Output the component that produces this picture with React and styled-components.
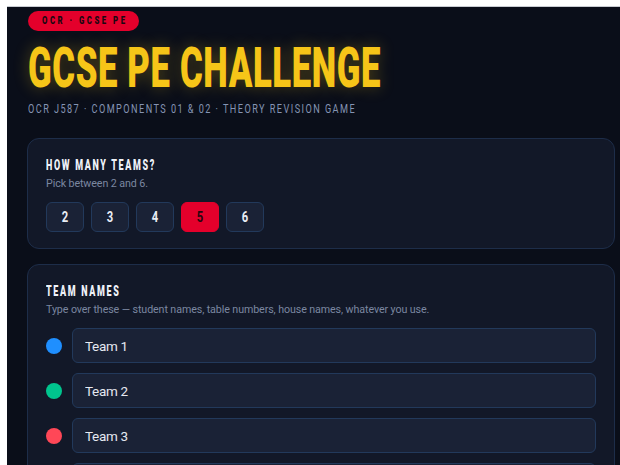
import React, { useState } from 'react';
import styled, { createGlobalStyle } from 'styled-components';

const GlobalStyle = createGlobalStyle`
    html, body {
        margin: 0;
        padding: 0;
        background: #ffffff;
        overflow: hidden;
    }
    * { box-sizing: border-box; }
`;

// no condensed face is installed, so the display type is Roboto squeezed horizontally
const DISPLAY = `"Roboto", "Liberation Sans", sans-serif`;
const BODY = `"Roboto", "Inter", sans-serif`;

const teamColours = ['#1f8fff', '#00c58e', '#ff4757', '#f5c518', '#a55eea', '#ff9f43'];

const App = () => {
    const [count, setCount] = useState(5);
    const [names, setNames] = useState(['Team 1', 'Team 2', 'Team 3', 'Team 4', 'Team 5', 'Team 6']);

    const rename = (i, value) => {
        const next = [...names];
        next[i] = value;
        setNames(next);
    };

    return (
        <>
            <GlobalStyle />
            <Frame>
                <Screen>
                    <Badge><BadgeText>OCR · GCSE PE</BadgeText></Badge>
                    <Title>GCSE PE CHALLENGE</Title>
                    <Subtitle>OCR J587 · COMPONENTS 01 &amp; 02 · THEORY REVISION GAME</Subtitle>

                    <Card>
                        <CardTitle>HOW MANY TEAMS?</CardTitle>
                        <CardHint>Pick between 2 and 6.</CardHint>
                        <CountRow>
                            {[2, 3, 4, 5, 6].map((n) => (
                                <CountButton key={n} $active={n === count} onClick={() => setCount(n)}>
                                    <CountLabel>{n}</CountLabel>
                                </CountButton>
                            ))}
                        </CountRow>
                    </Card>

                    <Card>
                        <CardTitle>TEAM NAMES</CardTitle>
                        <CardHint>Type over these — student names, table numbers, house names, whatever you use.</CardHint>
                        <NameList>
                            {names.slice(0, count).map((name, i) => (
                                <NameRow key={i}>
                                    <Dot $colour={teamColours[i]} />
                                    <NameInput value={name} onChange={(e) => rename(i, e.target.value)} />
                                </NameRow>
                            ))}
                        </NameList>
                    </Card>
                </Screen>
            </Frame>
        </>
    );
};

export default App;


const Frame = styled.div`
    padding: 6px 0 0 7px;
    width: 100%;
    height: 465px;
    background: #ffffff;
`;
const Screen = styled.main`
    display: flex;
    flex-direction: column;
    align-items: flex-start;
    width: 100%;
    min-height: 100%;
    padding: 4px 5px 0 20px;
    background: #0a0e19;
    border-top: 1px solid #c9ccd2;

    & > * {
        flex-shrink: 0;
    }
`;
const Badge = styled.span`
    display: inline-flex;
    align-items: center;
    width: 111px;
    height: 20px;
    margin-left: 1px;
    padding-left: 14px;
    border-radius: 10px;
    background: #e4002b;
    overflow: hidden;
`;
const BadgeText = styled.span`
    display: inline-block;
    white-space: nowrap;
    font-family: ${DISPLAY};
    font-weight: 900;
    font-size: 10px;
    line-height: 12px;
    letter-spacing: 3.2px;
    color: #1a0710;
    transform: scaleX(0.78);
    transform-origin: left center;
`;
const Title = styled.h1`
    margin: 9px 0 0 1px;
    white-space: nowrap;
    font-family: ${DISPLAY};
    font-weight: 900;
    font-size: 56px;
    line-height: 56px;
    letter-spacing: 1px;
    color: #f6c518;
    text-shadow: 0 0 20px rgba(246, 197, 24, 0.32);
    transform: scaleX(0.62);
    transform-origin: left center;
`;
const Subtitle = styled.p`
    margin: 5px 0 0 1px;
    white-space: nowrap;
    font-family: ${DISPLAY};
    font-size: 12.5px;
    line-height: 15px;
    letter-spacing: 2px;
    color: #8594b3;
    transform: scaleX(0.73);
    transform-origin: left center;
`;
const Card = styled.section`
    display: flex;
    flex-direction: column;
    align-items: flex-start;
    width: 100%;
    margin-top: 22px;
    padding: 17px 18px 16px 18px;
    background: #121828;
    border: 1px solid #1d2d49;
    border-radius: 12px;

    & + & {
        margin-top: 15px;
    }
`;
const CardTitle = styled.h2`
    margin: 0;
    white-space: nowrap;
    font-family: ${DISPLAY};
    font-weight: 900;
    font-size: 14px;
    line-height: 18px;
    letter-spacing: 2.6px;
    color: #eef1f8;
    transform: scaleX(0.64);
    transform-origin: left center;
`;
const CardHint = styled.p`
    margin: 3px 0 0;
    font-family: ${BODY};
    font-size: 10.7px;
    line-height: 14px;
    letter-spacing: -0.1px;
    color: #7b87a0;
`;
const CountRow = styled.div`
    display: flex;
    gap: 7px;
    margin-top: 11px;
`;
const CountButton = styled.button`
    display: flex;
    align-items: center;
    justify-content: center;
    width: 38px;
    height: 30px;
    padding: 0;
    border-radius: 6px;
    border: 1px solid ${({ $active }) => ($active ? '#e4002b' : '#22395b')};
    background: ${({ $active }) => ($active ? '#e4002b' : '#1a2236')};
    color: ${({ $active }) => ($active ? '#23070f' : '#e9edf5')};
    cursor: pointer;
`;
const CountLabel = styled.span`
    display: inline-block;
    font-family: ${DISPLAY};
    font-weight: 700;
    font-size: 14px;
    line-height: 14px;
    transform: scaleX(0.8);
`;
const NameList = styled.div`
    display: flex;
    flex-direction: column;
    gap: 10px;
    width: 100%;
    margin-top: 11px;
`;
const NameRow = styled.div`
    display: flex;
    align-items: center;
    gap: 10px;
`;
const Dot = styled.span`
    flex-shrink: 0;
    width: 16px;
    height: 16px;
    border-radius: 50%;
    background: ${({ $colour }) => $colour};
`;
const NameInput = styled.input`
    flex: 1;
    min-width: 0;
    height: 35px;
    padding: 0 12px;
    border-radius: 6px;
    border: 1px solid #22395b;
    background: #1a2236;
    color: #e6e9f1;
    font-family: ${BODY};
    font-size: 13.5px;
    letter-spacing: -0.3px;
    outline: none;
`;
